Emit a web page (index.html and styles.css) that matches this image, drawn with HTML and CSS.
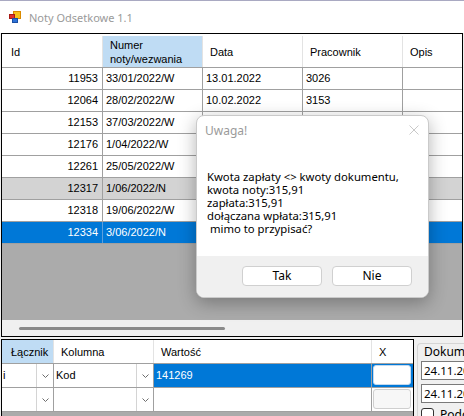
FILE: index.html
```html
<!DOCTYPE html>
<html lang="pl">
<head>
    <meta charset="UTF-8">
    <title>Noty Odsetkowe 1.1</title>
    <link rel="stylesheet" href="styles.css">
</head>
<body>
<div class="window">
    <div class="titlebar">
        <svg class="appicon" width="12" height="12" viewBox="0 0 12 12">
            <rect x="4.5" y="0.5" width="7" height="7" fill="#f7c21b" stroke="#d98a00"/>
            <rect x="0.5" y="3.5" width="5" height="4" fill="#e0312b" stroke="#a81a15"/>
            <rect x="3.5" y="7.5" width="5" height="4" fill="#2e72d8" stroke="#1a4fa3"/>
        </svg>
        <span class="title">Noty Odsetkowe 1.1</span>
    </div>

    <!-- lista not -->
    <div class="grid notes">
        <div class="head">
            <div class="hc c-id">Id</div>
            <div class="hc c-col on">Numer<br>noty/wezwania</div>
            <div class="hc c-col">Data</div>
            <div class="hc c-col">Pracownik</div>
            <div class="hc c-rest">Opis</div>
        </div>
        <div class="row">
            <div class="cell c-id num">11953</div>
            <div class="cell c-col">33/01/2022/W</div>
            <div class="cell c-col">13.01.2022</div>
            <div class="cell c-col">3026</div>
            <div class="cell c-rest"></div>
        </div>
        <div class="row">
            <div class="cell c-id num">12064</div>
            <div class="cell c-col">28/02/2022/W</div>
            <div class="cell c-col">10.02.2022</div>
            <div class="cell c-col">3153</div>
            <div class="cell c-rest"></div>
        </div>
        <div class="row">
            <div class="cell c-id num">12153</div>
            <div class="cell c-col">37/03/2022/W</div>
            <div class="cell c-col"></div>
            <div class="cell c-col"></div>
            <div class="cell c-rest"></div>
        </div>
        <div class="row">
            <div class="cell c-id num">12176</div>
            <div class="cell c-col">1/04/2022/W</div>
            <div class="cell c-col"></div>
            <div class="cell c-col"></div>
            <div class="cell c-rest"></div>
        </div>
        <div class="row">
            <div class="cell c-id num">12261</div>
            <div class="cell c-col">25/05/2022/W</div>
            <div class="cell c-col"></div>
            <div class="cell c-col"></div>
            <div class="cell c-rest"></div>
        </div>
        <div class="row grey">
            <div class="cell c-id num">12317</div>
            <div class="cell c-col">1/06/2022/N</div>
            <div class="cell c-col"></div>
            <div class="cell c-col"></div>
            <div class="cell c-rest"></div>
        </div>
        <div class="row">
            <div class="cell c-id num">12318</div>
            <div class="cell c-col">19/06/2022/W</div>
            <div class="cell c-col"></div>
            <div class="cell c-col"></div>
            <div class="cell c-rest"></div>
        </div>
        <div class="row selected">
            <div class="cell c-id num">12334</div>
            <div class="cell c-col">3/06/2022/N</div>
            <div class="cell c-col"></div>
            <div class="cell c-col"></div>
            <div class="cell c-rest"></div>
        </div>
        <div class="empty"></div>
        <div class="hscroll"><div class="thumb"></div></div>
    </div>

    <div class="bottom">
        <!-- filtr -->
        <div class="grid filter">
            <div class="head">
                <div class="hc f-link on">Łącznik</div>
                <div class="hc f-col">Kolumna</div>
                <div class="hc f-val">Wartość</div>
                <div class="hc f-x">X</div>
            </div>
            <div class="row">
                <div class="cell f-link combo"><span>i</span><span class="drop"><svg width="7" height="4" viewBox="0 0 7 4"><path d="M0.5 0.5 L3.5 3.5 L6.5 0.5" fill="none" stroke="#6d6d6d"/></svg></span></div>
                <div class="cell f-col combo"><span>Kod</span><span class="drop"><svg width="7" height="4" viewBox="0 0 7 4"><path d="M0.5 0.5 L3.5 3.5 L6.5 0.5" fill="none" stroke="#6d6d6d"/></svg></span></div>
                <div class="cell f-val sel">141269</div>
                <div class="cell f-x sel"><div class="xbtn focus"></div></div>
            </div>
            <div class="row">
                <div class="cell f-link combo"><span></span><span class="drop"><svg width="7" height="4" viewBox="0 0 7 4"><path d="M0.5 0.5 L3.5 3.5 L6.5 0.5" fill="none" stroke="#6d6d6d"/></svg></span></div>
                <div class="cell f-col combo"><span></span><span class="drop"><svg width="7" height="4" viewBox="0 0 7 4"><path d="M0.5 0.5 L3.5 3.5 L6.5 0.5" fill="none" stroke="#6d6d6d"/></svg></span></div>
                <div class="cell f-val"></div>
                <div class="cell f-x"><div class="xbtn"></div></div>
            </div>
        </div>

        <div class="side">
            <div class="group">
                <div class="group-title">Dokumenty</div>
                <div class="tb">24.11.2021</div>
                <div class="tb tb2">24.11.2021</div>
                <div class="check"><span class="box"></span><span>Podokumentowo</span></div>
            </div>
        </div>
    </div>

    <!-- okno komunikatu -->
    <div class="dialog">
        <div class="dlg-title">Uwaga!</div>
        <svg class="dlg-close" width="10" height="10" viewBox="0 0 10 10">
            <path d="M0.5 0.5 L9.5 9.5 M9.5 0.5 L0.5 9.5" stroke="#c9c9c9" stroke-width="1"/>
        </svg>
        <div class="dlg-msg">
            Kwota zapłaty &lt;&gt; kwoty dokumentu,<br>
            kwota noty:315,91<br>
            zapłata:315,91<br>
            dołączana wpłata:315,91<br>
            &nbsp;mimo to przypisać?
        </div>
        <div class="dlg-foot">
            <div class="btn">Tak</div>
            <div class="btn">Nie</div>
        </div>
    </div>
</div>
</body>
</html>
```

FILE: styles.css
```css
*{
    margin: 0;
    padding: 0;
    box-sizing: border-box;
}
html,body{
    width: 100%;
    height: 100%;
}
body{
    background: #f0f0f0;
    font-family: "Liberation Sans", Arial, sans-serif;
    font-size: 11px;
    color: #000;
}
.window{
    position: relative;
    width: 464px;
    height: 416px;
    overflow: hidden;
    background: #f0f0f0;
}
.titlebar{
    display: flex;
    align-items: center;
    gap: 8px;
    height: 33px;
    padding-left: 9px;
    background: #fff;
    border-top: 1px solid #a9a9c2;
}
.titlebar .title{
    font-family: "Noto Sans", sans-serif;
    font-size: 11px;
    color: #9a9a9a;
}

/* grids */
.grid{
    border: 1px solid #000;
    background: #ababab;
    overflow: hidden;
}
.grid .head{
    display: flex;
    background: #fff;
    border-bottom: 1px solid #a0a0a0;
}
.grid .hc{
    display: flex;
    align-items: center;
    flex: none;
    padding-left: 7px;
    border-right: 1px solid #e3e3e3;
    line-height: 14px;
    white-space: nowrap;
}
.grid .hc.on{
    background: #bfdcf4;
}
.grid .row{
    display: flex;
    background: #fff;
    border-bottom: 1px solid #a0a0a0;
}
.grid .cell{
    flex: none;
    padding: 0 3px;
    border-right: 1px solid #a0a0a0;
    white-space: nowrap;
    overflow: hidden;
}
.grid .cell.num{
    text-align: right;
    padding-right: 4px;
}
.grid .row.grey{
    background: #d3d3d3;
}
.grid .row.selected{
    background: #0078d7;
    color: #fff;
}
.grid .row.selected .cell{
    border-right-color: #5c9fdc;
}

.notes{
    width: 462px;
    height: 304px;
    margin-left: 1px;
}
.notes .head{
    height: 34px;
    padding-top: 2px;
}
.notes .row{
    height: 22px;
}
.notes .cell{
    line-height: 21px;
}
.notes .c-id{
    width: 101px;
}
.notes .hc.c-id{
    padding-left: 9px;
}
.notes .c-col{
    width: 100px;
}
.notes .c-rest{
    flex: 1;
    border-right: none;
}
.notes .empty{
    height: 76px;
}
.notes .hscroll{
    height: 16px;
    padding-top: 7px;
    background: #f0f0f0;
}
.notes .thumb{
    width: 206px;
    height: 3px;
    margin-left: 17px;
    border-radius: 2px;
    background: #8a8a8a;
}

.bottom{
    display: flex;
    margin-top: 2px;
}
.filter{
    flex: none;
    width: 413px;
    height: 80px;
    margin-left: 1px;
    border-bottom: none;
}
.filter .head{
    height: 24px;
}
.filter .hc{
    padding-left: 7px;
}
.filter .hc.f-link{
    padding-left: 9px;
}
.filter .row{
    height: 24px;
}
.filter .cell{
    line-height: 23px;
    padding: 0 2px;
}
.filter .f-link{
    width: 52px;
}
.filter .f-col{
    width: 100px;
}
.filter .f-val{
    width: 218px;
}
.filter .f-x{
    width: 41px;
    border-right: none;
}
.filter .cell.f-link{
    padding-left: 1px;
}
.filter .combo{
    display: flex;
    padding-right: 0;
}
.filter .drop{
    display: flex;
    align-items: center;
    justify-content: center;
    width: 17px;
    margin-left: auto;
    border-left: 1px solid #d4d4d4;
}
.filter .cell.sel{
    background: #0078d7;
    color: #fff;
}
.filter .cell.f-x{
    padding: 1px 2px 2px 1px;
}
.xbtn{
    height: 20px;
    border: 1px solid #cfcfcf;
    border-radius: 3px;
    background: #f7f7f7;
}
.xbtn.focus{
    border-color: #c4d9ee;
    background: #fff;
}

.side{
    flex: 1;
    min-width: 0;
    overflow: hidden;
    padding: 4px 0 0 3px;
}
.group{
    height: 80px;
    padding-left: 3px;
    border: 1px solid #d5d5d5;
    border-right: none;
    border-radius: 4px 0 0 0;
    font-family: "Noto Sans", sans-serif;
    white-space: nowrap;
}
.group-title{
    display: inline-block;
    margin: -2px 0 0 2px;
    padding: 0 1px;
    line-height: 15px;
    font-size: 12px;
    background: #f0f0f0;
}
.tb{
    width: 60px;
    height: 19px;
    margin-top: 2px;
    padding-left: 2px;
    border: 1px solid #7a7a7a;
    border-right: none;
    background: #fff;
    font-size: 11.5px;
    line-height: 17px;
    overflow: hidden;
}
.tb2{
    margin-top: 4px;
}
.check{
    display: flex;
    align-items: center;
    gap: 6px;
    margin-top: 3px;
    font-size: 12px;
}
.check .box{
    width: 13px;
    height: 13px;
    flex: none;
    border: 1px solid #333;
    border-radius: 3px;
    background: #fff;
}

/* dialog */
.dialog{
    position: absolute;
    left: 196px;
    top: 115px;
    width: 233px;
    height: 183px;
    display: flex;
    flex-direction: column;
    border: 1px solid #cacaca;
    border-radius: 8px;
    background: #fff;
    overflow: hidden;
    box-shadow: 0 5px 18px rgba(0,0,0,0.3);
    font-family: "Noto Sans", sans-serif;
    font-size: 12px;
}
.dlg-title{
    height: 54px;
    padding: 7px 0 0 8px;
    line-height: 16px;
    color: #9a9a9a;
}
.dlg-close{
    position: absolute;
    right: 9px;
    top: 9px;
}
.dlg-msg{
    padding-left: 10px;
    font-size: 11.3px;
    line-height: 13px;
    white-space: nowrap;
}
.dlg-foot{
    display: flex;
    justify-content: flex-end;
    gap: 10px;
    height: 41px;
    margin-top: auto;
    padding: 10px 16px 0 0;
    background: #f0f0f0;
}
.btn{
    width: 80px;
    height: 20px;
    border: 1px solid #d0d0d0;
    border-radius: 4px;
    background: #fff;
    text-align: center;
    line-height: 18px;
}
```
